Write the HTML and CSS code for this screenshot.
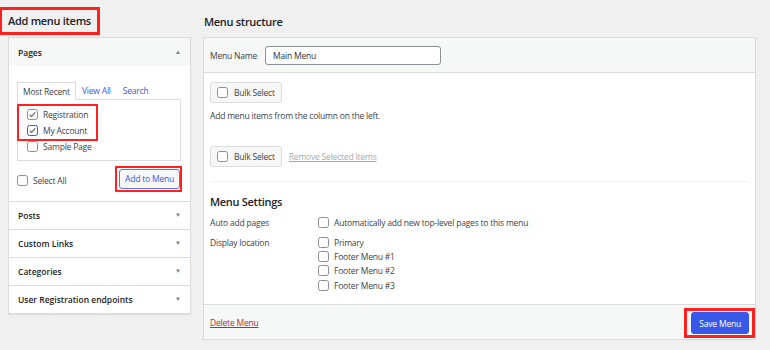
FILE: index.html
```html
<!DOCTYPE html>
<html lang="en">
<head>
  <meta charset="UTF-8">
  <title>Menus</title>
  <link rel="stylesheet" href="styles.css">
</head>
<body>
  <div class="menus">
    <!-- left column: items to add -->
    <div class="side">
      <h2 class="col-title"><span class="mark">Add menu items</span></h2>
      <div class="box">
        <div class="acc-head open">
          <span>Pages</span>
          <span class="arrow">&#9650;</span>
        </div>
        <div class="acc-body">
          <div class="tabs">
            <span class="tab active">Most Recent</span>
            <span class="tab">View All</span>
            <span class="tab">Search</span>
          </div>
          <div class="tab-panel">
            <div class="mark list-mark">
              <label class="check"><span class="cb checked"><svg viewBox="0 0 10 10"><path d="M2 5.2l2 2 4-4.6" /></svg></span>Registration</label>
              <label class="check"><span class="cb checked focus"><svg viewBox="0 0 10 10"><path d="M2 5.2l2 2 4-4.6" /></svg></span>My Account</label>
            </div>
            <label class="check"><span class="cb"></span>Sample Page</label>
          </div>
          <div class="acc-actions">
            <label class="check"><span class="cb"></span>Select All</label>
            <span class="mark"><button class="btn btn-outline">Add to Menu</button></span>
          </div>
        </div>
        <div class="acc-head">
          <span>Posts</span>
          <span class="arrow">&#9660;</span>
        </div>
        <div class="acc-head">
          <span>Custom Links</span>
          <span class="arrow">&#9660;</span>
        </div>
        <div class="acc-head">
          <span>Categories</span>
          <span class="arrow">&#9660;</span>
        </div>
        <div class="acc-head">
          <span>User Registration endpoints</span>
          <span class="arrow">&#9660;</span>
        </div>
      </div>
    </div>

    <!-- right column: menu structure -->
    <div class="main">
      <h2 class="col-title plain">Menu structure</h2>
      <div class="box">
        <div class="menu-head">
          <label for="menuName">Menu Name</label>
          <input type="text" id="menuName" class="name-input" value="Main Menu">
        </div>
        <div class="menu-body">
          <button class="btn"><span class="cb"></span>Bulk Select</button>
          <p class="hint">Add menu items from the column on the left.</p>
          <div class="bulk-row">
            <button class="btn"><span class="cb"></span>Bulk Select</button>
            <a class="remove-link">Remove Selected Items</a>
          </div>
          <div class="settings">
            <h3>Menu Settings</h3>
            <div class="setting">
              <span class="setting-label">Auto add pages</span>
              <div class="setting-opts">
                <label class="check"><span class="cb"></span>Automatically add new top-level pages to this menu</label>
              </div>
            </div>
            <div class="setting">
              <span class="setting-label">Display location</span>
              <div class="setting-opts">
                <label class="check"><span class="cb"></span>Primary</label>
                <label class="check"><span class="cb"></span>Footer Menu #1</label>
                <label class="check"><span class="cb"></span>Footer Menu #2</label>
                <label class="check"><span class="cb"></span>Footer Menu #3</label>
              </div>
            </div>
          </div>
        </div>
        <div class="menu-foot">
          <a class="delete-link">Delete Menu</a>
          <span class="mark save-mark"><button class="btn btn-primary">Save Menu</button></span>
        </div>
      </div>
    </div>
  </div>
</body>
</html>
```

FILE: styles.css
```css
body {
  margin: 0;
  background-color: #f0f0f1;
  font-family: "Open Sans", "Noto Sans", sans-serif;
  font-size: 8.5px;
  letter-spacing: -0.2px;
  color: #3c434a;
}
.menus {
  display: flex;
  gap: 12px;
  padding: 8px 14px 0 8px;
}
.side {
  width: 183px;
  flex: none;
}
.main {
  flex: 1;
}
.col-title {
  margin: 0 0 3px;
  height: 26px;
  display: flex;
  align-items: center;
  font-size: 11px;
  letter-spacing: -0.3px;
  font-weight: 600;
  color: #1d2327;
}
.col-title.plain {
  padding-left: 1px;
}
.mark {
  outline: 2px solid #ff2020;
}
.col-title .mark {
  margin-left: -6px;
  padding: 3px 6px 4px 6px;
  outline-width: 3px;
}
.box {
  background-color: #fff;
  border: 1px solid #dcdcde;
  box-shadow: 0 1px 1px rgba(0,0,0,0.06);
}
.acc-head {
  display: flex;
  justify-content: space-between;
  align-items: center;
  height: 27px;
  padding: 0 9px 0 9px;
  border-top: 1px solid #dcdcde;
  font-size: 8.5px;
  letter-spacing: 0;
  font-weight: 600;
  color: #1d2327;
}
.acc-head.open {
  border-top: none;
  height: 28px;
  background-color: #f6f7f7;
}
.arrow {
  font-size: 6px;
  color: #787c82;
}
.acc-body {
  padding: 16px 9px 11px 8px;
}
.tabs {
  display: flex;
  align-items: flex-end;
}
.tab {
  padding: 3px 6px 3px 0;
  color: #3858e9;
}
.tab.active {
  color: #3c434a;
  padding: 3px 5px 3px 5px;
  background-color: #fff;
  border: 1px solid #dcdcde;
  border-bottom: none;
  margin-bottom: -1px;
  position: relative;
}
.tab + .tab {
  padding-left: 6px;
  padding-right: 6px;
}
.tab-panel {
  border: 1px solid #dcdcde;
  padding: 6px 0 5px 1px;
  display: flex;
  flex-direction: column;
  align-items: flex-start;
}
.list-mark {
  display: flex;
  flex-direction: column;
  padding: 1px 8px 1px 8px;
}
.tab-panel > .check {
  margin-left: 8px;
}
.check {
  display: flex;
  align-items: center;
  gap: 5px;
  height: 15.5px;
}
.cb {
  width: 9px;
  height: 9px;
  border: 1px solid #8c8f94;
  border-radius: 2.5px;
  background-color: #fff;
  flex: none;
  display: inline-flex;
}
.cb.focus {
  border-color: #3858e9;
}
.cb svg {
  width: 9px;
  height: 9px;
  fill: none;
  stroke: #50575e;
  stroke-width: 1.2;
}
.acc-actions {
  display: flex;
  justify-content: space-between;
  align-items: center;
  margin-top: 7px;
}
.acc-actions .check {
  margin-top: 4px;
}
.acc-actions .mark {
  display: inline-flex;
  padding: 1px 0 1px 2px;
  margin-right: 1px;
}
.btn {
  font-family: inherit;
  font-size: 8.5px;
  letter-spacing: -0.2px;
  display: inline-flex;
  align-items: center;
  gap: 6px;
  height: 21px;
  padding: 0 6px;
  border: 1px solid #dcdcde;
  border-radius: 3px;
  background-color: #f6f7f7;
  color: #3c434a;
}
.btn-outline {
  height: 20px;
  padding: 0 5px;
  border-color: #5b74ec;
  color: #3858e9;
}
.btn-primary {
  height: 22px;
  background-color: #3858e9;
  border-color: #3858e9;
  color: #fff;
  padding: 0 7px;
}
.menu-head {
  display: flex;
  align-items: center;
  gap: 8px;
  height: 34px;
  padding: 0 6px;
  background-color: #f6f7f7;
  border-bottom: 1px solid #dcdcde;
}
.name-input {
  width: 160px;
  height: 17px;
  padding: 0 7px;
  border: 1px solid #8c8f94;
  border-radius: 3px;
  font-family: inherit;
  font-size: 8.5px;
  letter-spacing: -0.2px;
  color: #2c3338;
}
.menu-body {
  padding: 9px 6px 7px;
}
.hint {
  margin: 7px 0 0;
  height: 14px;
}
.bulk-row {
  display: flex;
  align-items: center;
  gap: 7px;
  margin-top: 22px;
  padding-bottom: 14px;
  border-bottom: 1px solid #f0f0f1;
}
.remove-link {
  color: #a7aaad;
  text-decoration: underline;
}
.settings h3 {
  margin: 12px 0 6px;
  font-size: 11px;
  letter-spacing: -0.3px;
  font-weight: 600;
  color: #1d2327;
}
.setting {
  display: flex;
  margin-bottom: 5px;
}
.setting-label {
  width: 108px;
  flex: none;
  line-height: 15px;
}
.setting-opts {
  display: flex;
  flex-direction: column;
}
.setting-opts .check {
  height: 14.3px;
}
.menu-foot {
  display: flex;
  justify-content: space-between;
  align-items: center;
  height: 34px;
  padding: 0 6px 0 6px;
  background-color: #f6f7f7;
  border-top: 1px solid #dcdcde;
}
.delete-link {
  color: #b32d2e;
  text-decoration: underline;
}
.save-mark {
  display: inline-flex;
  outline-width: 3px;
  padding: 1px 3px 1px 4px;
  margin-right: -3px;
  margin-top: 2px;
}
```
